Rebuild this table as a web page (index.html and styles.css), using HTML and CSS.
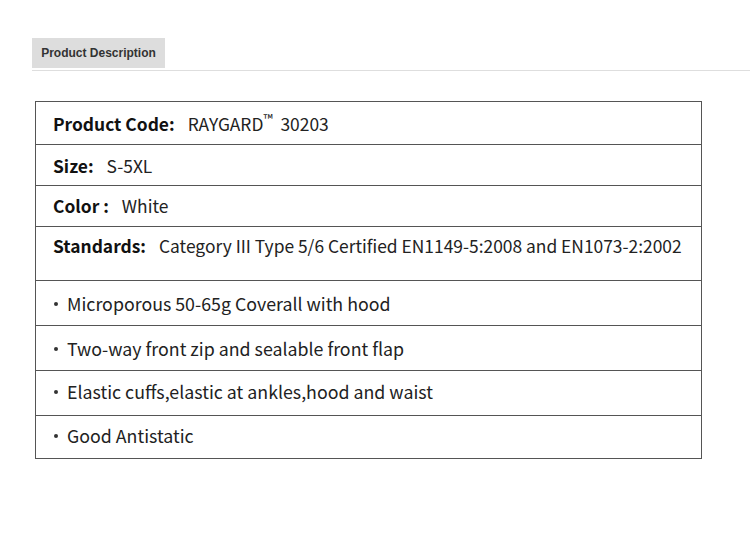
FILE: index.html
```html
<!DOCTYPE html>
<html>
<head>
<meta charset="utf-8">
<link rel="stylesheet" href="styles.css">
</head>
<body>
<div class="tabs">
  <div class="tab">Product Description</div>
</div>
<div class="spec">
  <div class="row hd r1"><b>Product Code:</b><span class="val">RAYGARD<sup>™</sup>&nbsp; 30203</span></div>
  <div class="row hd r2"><b>Size:</b><span class="val">S-5XL</span></div>
  <div class="row hd r3"><b>Color :</b><span class="val">White</span></div>
  <div class="row hd r4"><b>Standards:</b><span class="val">Category III Type 5/6 Certified EN1149-5:2008 and EN1073-2:2002</span></div>
  <div class="row li"><span class="dot"></span>Microporous 50-65g Coverall with hood</div>
  <div class="row li"><span class="dot"></span>Two-way front zip and sealable front flap</div>
  <div class="row li"><span class="dot"></span>Elastic cuffs,elastic at ankles,hood and waist</div>
  <div class="row li last"><span class="dot"></span>Good Antistatic</div>
</div>
</body>
</html>
```
FILE: styles.css
```css
html, body { margin: 0; padding: 0; background: #fff; }
body { padding-top: 38px; }
.tabs {
  margin-left: 32px;
  border-bottom: 1px solid #dedede;
  height: 32px;
}
.tab {
  display: inline-block;
  width: 133px;
  height: 30px;
  background: #dddddd;
  color: #333;
  font: bold 12px "Liberation Sans", Arial, sans-serif;
  line-height: 30px;
  text-align: center;
}
.spec {
  margin: 30px 0 0 35px;
  width: 665px;
  border: 1px solid #555;
  font-family: "Noto Sans CJK SC", "Noto Sans", sans-serif;
  font-size: 17.8px;
  color: #222;
}
.row {
  display: flex;
  align-items: center;
  padding-left: 17px;
  border-bottom: 1px solid #555;
  box-sizing: border-box;
  white-space: nowrap;
}
.hd { font-size: 17.4px; }
.row b { font-weight: bold; color: #111; }
.val { margin-left: 13px; }
.r1 { height: 43px; padding-top: 1px; }
.r2 { height: 41px; }
.r3 { height: 41px; padding-bottom: 2px; }
.r4 { height: 54px; align-items: flex-start; padding-top: 6px; }
.li { height: 45px; padding-bottom: 1px; }
.li:nth-child(7) { padding-bottom: 4px; }
.last { height: 42px; border-bottom: none; padding-bottom: 4px; }
.dot {
  width: 4px;
  height: 4px;
  border-radius: 50%;
  background: #333;
  margin: 2px 9px 0 1px;
}
sup { font-size: 13px; line-height: 0; vertical-align: 7px; }
```
